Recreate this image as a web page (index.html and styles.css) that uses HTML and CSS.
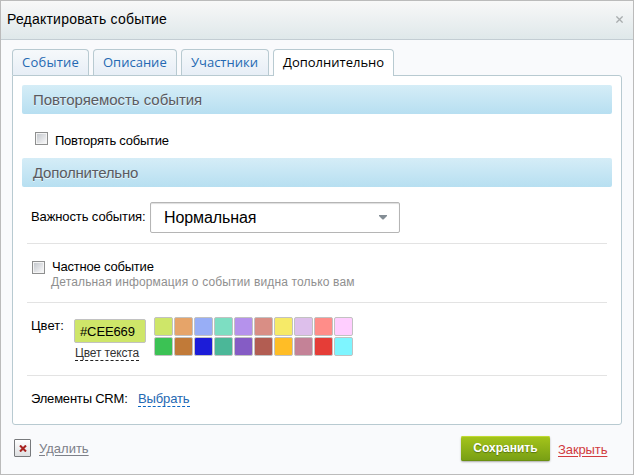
FILE: index.html
```html
<!DOCTYPE html>
<html lang="ru">
<head>
<meta charset="utf-8">
<title>Редактировать событие</title>
<link rel="stylesheet" href="styles.css">
</head>
<body>
<div class="dialog">
  <header class="titlebar">
    <h1 class="title">Редактировать событие</h1>
    <svg class="close" width="7" height="7" viewBox="0 0 7 7"><path d="M.4.4l6.2 6.2M6.6.4L.4 6.6"/></svg>
  </header>
  <nav class="tabs">
    <a class="tab tab-event">Событие</a>
    <a class="tab tab-description">Описание</a>
    <a class="tab tab-members">Участники</a>
    <a class="tab tab-more active">Дополнительно</a>
  </nav>
  <main class="panel">
    <h2 class="section section-repeat">Повторяемость события</h2>
    <label class="repeat"><i class="check"></i><span class="repeat-text">Повторять событие</span></label>
    <h2 class="section section-more">Дополнительно</h2>
    <div class="row importance">
      <span class="importance-label">Важность события:</span>
      <div class="select"><span>Нормальная</span><svg width="8" height="5" viewBox="0 0 8 5"><path d="M0 0h8v1L4.5 4.5h-1L0 1z"/></svg></div>
    </div>
    <div class="row private">
      <i class="check"></i>
      <div><div class="private-title">Частное событие</div><div class="hint">Детальная информация о событии видна только вам</div></div>
    </div>
    <div class="row color">
      <span class="color-label">Цвет:</span>
      <div class="color-value"><div class="color-input">#CEE669</div><a class="text-color">Цвет текста</a></div>
      <div class="palette">
        <i class="c1"></i><i class="c2"></i><i class="c3"></i><i class="c4"></i><i class="c5"></i><i class="c6"></i><i class="c7"></i><i class="c8"></i><i class="c9"></i><i class="c10"></i>
        <i class="c11"></i><i class="c12"></i><i class="c13"></i><i class="c14"></i><i class="c15"></i><i class="c16"></i><i class="c17"></i><i class="c18"></i><i class="c19"></i><i class="c20"></i>
      </div>
    </div>
    <div class="row crm"><span class="crm-label">Элементы CRM:</span><a class="choose">Выбрать</a></div>
  </main>
  <footer class="footer">
    <span class="delete-icon"><svg width="8" height="7" viewBox="0 0 8 7"><path d="M1 .5l6 6M7 .5l-6 6"/></svg></span>
    <a class="delete">Удалить</a>
    <button class="save">Сохранить</button>
    <a class="cancel">Закрыть</a>
  </footer>
</div>
</body>
</html>
```
FILE: styles.css
```css
* { box-sizing: border-box; }
body { margin: 0; font: 13px/16px "Liberation Sans", Arial, sans-serif; color: #000; }
h1, h2 { margin: 0; font-weight: normal; }
span, a { white-space: nowrap; }
.dialog { width: 634px; height: 475px; border: 1px solid #bbb; background: #f9fafc; }
.titlebar { height: 39px; display: flex; justify-content: space-between; padding: 0 10px 0 6px; border-bottom: 1px solid #c3cdd3; background: linear-gradient(#f8f8f8, #dfe8ea); }
.title { font-size: 14px; line-height: 36px; letter-spacing: .21px; }
.close { margin-top: 15px; fill: none; stroke: #a9adae; stroke-width: 1.3; }

.tabs { display: flex; gap: 4px; height: 26px; margin: 9px 0 0 11px; }
.tab { height: 26px; padding-left: 9px; border: 1px solid #b8cad1; border-bottom: 0; border-radius: 4px 4px 0 0; background: linear-gradient(#f6f9fb, #e7eef6); color: #2468b2; font: 13px/25px "Open Sans", sans-serif; }
.tab-event { width: 77px; letter-spacing: .25px; }
.tab-description { width: 84px; }
.tab-members { width: 88px; }
.tab-more { width: 121px; }
.tab.active { position: relative; height: 27px; background: #fff; color: #000; }

.panel { width: 610px; height: 350px; margin-left: 11px; padding: 9px; border: 1px solid #b8cad1; border-radius: 0 3px 3px 3px; background: #fff; }
.section { height: 29px; padding-left: 11px; border-radius: 2px; background: linear-gradient(#d5edf7, #b7dff1); color: #5a5a60; font-size: 15px; line-height: 29px; text-shadow: 0 1px 0 #e4f4fb; }
.section-repeat { letter-spacing: -.05px; }
.section-more { letter-spacing: -.22px; }
.repeat { display: flex; height: 44px; padding: 18px 0 0 13px; }
.check { flex: none; width: 13px; height: 13px; border: 1px solid #8e8f8f; background: linear-gradient(135deg, #c5c9ce, #f7f7f8) center / 9px 9px no-repeat #f4f4f4; }
.repeat-text { margin: 1px 0 0 7px; letter-spacing: -.24px; }

.row { display: flex; margin: 0 5px; border-bottom: 1px solid #e3e3e3; }
.importance { height: 57px; padding: 15px 0 0 4px; }
.importance-label { width: 119px; padding-top: 7px; letter-spacing: -.11px; }
.select { display: flex; justify-content: space-between; align-items: center; width: 250px; height: 31px; padding: 0 12px 0 13px; border: 1px solid #b5b5b5; border-radius: 2px; box-shadow: inset 0 1px 1px #ddd; font-size: 16px; letter-spacing: -.1px; }
.select svg { fill: #848d95; }
.private { height: 59px; padding: 15px 0 0 5px; }
.private .check { margin-top: 2px; }
.private-title { margin-left: 7px; letter-spacing: -.2px; }
.hint { margin-left: 6px; font-size: 12px; line-height: 15px; letter-spacing: .15px; color: #8f8f8f; }
.color { height: 73px; padding: 14px 0 0 4px; }
.color-label { width: 43px; padding-top: 1px; }
.color-value { width: 80px; padding-top: 2px; }
.color-input { width: 72px; height: 24px; padding-left: 5px; border: 1px solid #c2c2c2; border-radius: 2px; background: #cee669; line-height: 23px; letter-spacing: -.12px; }
.text-color { display: block; width: 64px; height: 18px; margin: 0 0 0 1px; border-bottom: 1px dashed #222; color: #333; font-size: 12px; line-height: 21px; letter-spacing: -.15px; }
.palette { display: grid; grid-template-columns: repeat(10, 19px); grid-auto-rows: 19px; gap: 1px; }
.palette i { border: 1px solid #c2c2c2; border-radius: 2px; }
.c1 { background: #cee669; } .c2 { background: #e6a469; } .c3 { background: #98aef6; } .c4 { background: #7ddec2; } .c5 { background: #b592ec; }
.c6 { background: #d98e85; } .c7 { background: #f6ea68; } .c8 { background: #ddbfeb; } .c9 { background: #ff8d89; } .c10 { background: #ffceff; }
.c11 { background: #3bc254; } .c12 { background: #c17a38; } .c13 { background: #1c1cd8; } .c14 { background: #4bb798; } .c15 { background: #855cc5; }
.c16 { background: #b25d52; } .c17 { background: #ffbd26; } .c18 { background: #c48297; } .c19 { background: #e53d37; } .c20 { background: #7ef5ff; }
.crm { padding: 15px 0 0 4px; border: 0; }
.crm-label { width: 107px; letter-spacing: -.2px; }
.choose { height: 16px; border-bottom: 1px dashed #0b66c3; color: #2468b2; letter-spacing: -.12px; }

.footer { display: flex; align-items: flex-start; padding: 11px 0 0 13px; }
.delete-icon { display: flex; align-items: center; justify-content: center; width: 17px; height: 18px; margin-top: 3px; border: 1px solid #77797c; border-radius: 1px; background: linear-gradient(#fff, #dedfe1); }
.delete-icon svg { fill: none; stroke: #a82320; stroke-width: 2.1; }
.delete { margin: 5px 0 0 8px; color: #7d8089; text-decoration: underline; text-underline-offset: 2px; }
.save { width: 89px; height: 25px; margin-left: auto; padding: 0; border: 0; border-radius: 2px; background: linear-gradient(#a5c51b, #779e14); box-shadow: inset 0 1px 0 #c0db32, inset 0 -1px 0 #6b9012, 0 1px 2px #aaa; color: #fff; font: bold 12px/25px "Liberation Sans", Arial, sans-serif; text-shadow: 0 1px 1px #557411; }
.cancel { width: 49px; margin: 6px 26px 0 8px; color: #d13b40; text-decoration: underline; text-underline-offset: 2px; letter-spacing: -.1px; }
```
